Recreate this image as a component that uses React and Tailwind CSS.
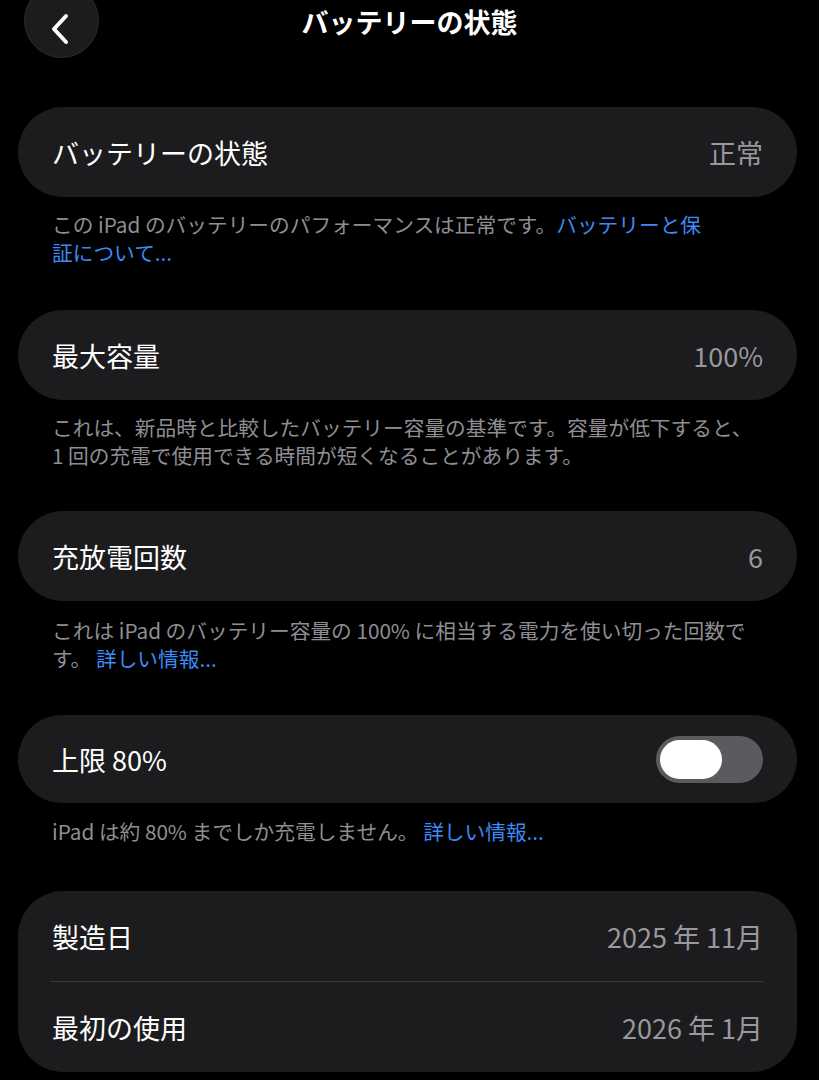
import React from 'react'

const font = { fontFamily: '"Noto Sans CJK JP", "Noto Sans", sans-serif' }

function Row({ label, value, children }) {
  return (
    <div className="flex items-center justify-between h-[90px] pl-[34px] pr-[34px]">
      <span className="text-[27px] text-white leading-none">{label}</span>
      {children || <span className="text-[27px] text-[#98989e] leading-none">{value}</span>}
    </div>
  )
}

function Card({ children }) {
  return <div className="bg-[#1c1c1e] rounded-[45px] ml-[18px] mr-[22px]">{children}</div>
}

function Note({ children, className = 'mb-[44px]' }) {
  return (
    <p className={`mt-[13px] px-[52px] text-[20.7px] leading-[28px] text-[#8e8e93] ${className}`}>
      {children}
    </p>
  )
}

function Link({ children }) {
  return <span className="text-[#3d8af5]">{children}</span>
}

function Toggle() {
  return (
    <div className="w-[107px] h-[47px] rounded-full bg-[#5b5b5f] flex items-center pl-[4px]">
      <div className="w-[62px] h-[39px] rounded-full bg-white" />
    </div>
  )
}

export default function App() {
  return (
    <div className="min-h-[1080px] bg-black overflow-hidden" style={font}>
      {/* Header */}
      <div className="relative h-[107px]">
        <div className="absolute left-[24px] top-[-17px] w-[75px] h-[75px] rounded-full bg-[#1c1c1e] border border-[#2c2c2e] flex items-center justify-center">
          <svg width="22" height="32" viewBox="0 0 22 32" className="mt-[16px] -ml-[4px]">
            <path d="M17 3 L5 16 L17 29" fill="none" stroke="white" strokeWidth="4" strokeLinecap="round" strokeLinejoin="round" />
          </svg>
        </div>
        <h1 className="text-center text-white text-[27px] font-bold leading-[44px]">バッテリーの状態</h1>
      </div>

      <Card>
        <Row label="バッテリーの状態" value="正常" />
      </Card>
      <Note>
        この iPad のバッテリーのパフォーマンスは正常です。<Link>バッテリーと保<br />証について...</Link>
      </Note>

      <Card>
        <Row label="最大容量" value="100%" />
      </Card>
      <Note className="mb-[42px]">
        これは、新品時と比較したバッテリー容量の基準です。容量が低下すると、<br />
        1 回の充電で使用できる時間が短くなることがあります。
      </Note>

      <Card>
        <Row label="充放電回数" value="6" />
      </Card>
      <Note className="mt-[15px] mb-[43px]">
        これは iPad のバッテリー容量の 100% に相当する電力を使い切った回数で<br />
        す。 <Link>詳しい情報...</Link>
      </Note>

      <Card>
        <div className="flex items-center justify-between h-[88px] pl-[34px] pr-[34px]">
          <span className="text-[27px] text-white leading-none">上限 80%</span>
          <Toggle />
        </div>
      </Card>
      <Note className="mt-[14px] mb-[46px]">
        iPad は約 80% までしか充電しません。 <Link>詳しい情報...</Link>
      </Note>

      <Card>
        <Row label="製造日" value="2025 年 11月" />
        <div className="ml-[32px] mr-[34px] h-px bg-[#3a3a3c]" />
        <Row label="最初の使用" value="2026 年 1月" />
      </Card>
    </div>
  )
}
